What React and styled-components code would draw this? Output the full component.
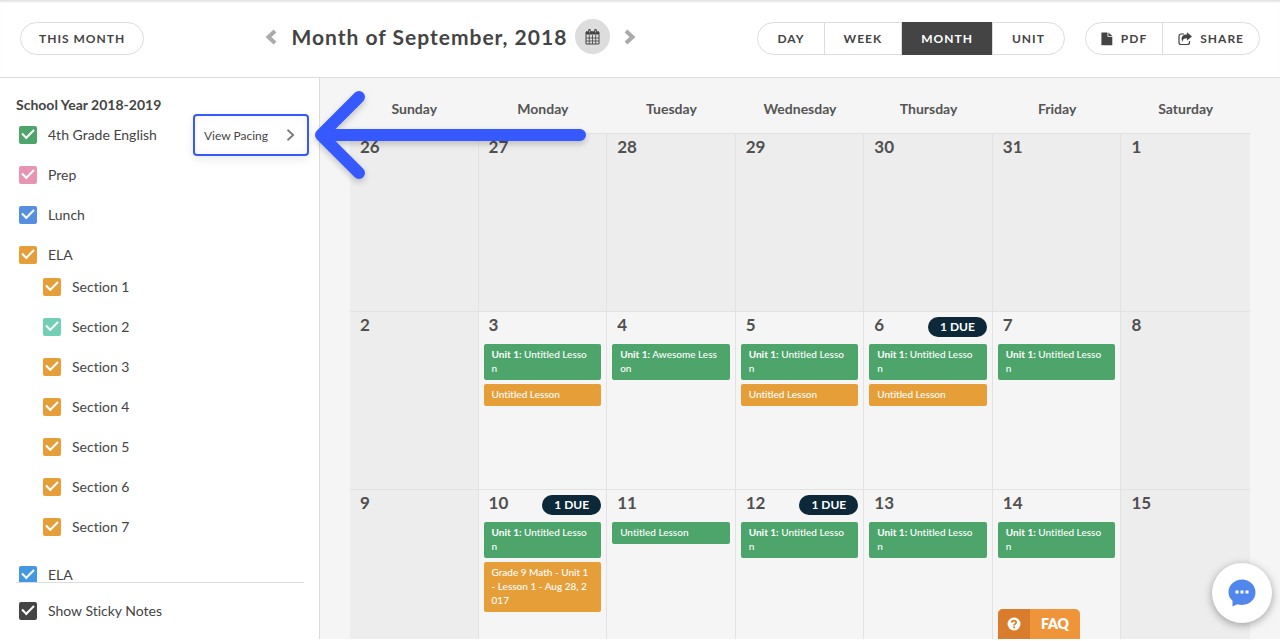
import React from 'react';
import styled, { createGlobalStyle } from 'styled-components';

const GREEN = '#4ea56c';
const ORANGE = '#e69e39';

const classes = [
    { name: '4th Grade English', color: GREEN, pacing: true },
    { name: 'Prep', color: '#e895b2' },
    { name: 'Lunch', color: '#548fe0' },
    {
        name: 'ELA',
        color: ORANGE,
        sections: [
            { name: 'Section 1', color: ORANGE },
            { name: 'Section 2', color: '#70cfb4' },
            { name: 'Section 3', color: ORANGE },
            { name: 'Section 4', color: ORANGE },
            { name: 'Section 5', color: ORANGE },
            { name: 'Section 6', color: ORANGE },
            { name: 'Section 7', color: ORANGE },
        ],
    },
    { name: 'ELA', color: '#4299e1' },
];

const weekdays = ['Sunday', 'Monday', 'Tuesday', 'Wednesday', 'Thursday', 'Friday', 'Saturday'];

const unitLesson = { unit: 'Unit 1:', lines: [' Untitled Lesso', 'n'], color: GREEN };
const looseLesson = { lines: ['Untitled Lesson'], color: ORANGE };

const weeks = [
    [26, 27, 28, 29, 30, 31, 1].map((day) => ({ day, muted: true })),
    [
        { day: 2, muted: true },
        { day: 3, events: [unitLesson, looseLesson] },
        { day: 4, events: [{ unit: 'Unit 1:', lines: [' Awesome Less', 'on'], color: GREEN }] },
        { day: 5, events: [unitLesson, looseLesson] },
        { day: 6, due: 1, events: [unitLesson, looseLesson] },
        { day: 7, events: [unitLesson] },
        { day: 8, muted: true },
    ],
    [
        { day: 9, muted: true },
        {
            day: 10,
            due: 1,
            events: [
                unitLesson,
                { lines: ['Grade 9 Math - Unit 1', '- Lesson 1 - Aug 28, 2', '017'], color: ORANGE },
            ],
        },
        { day: 11, events: [{ lines: ['Untitled Lesson'], color: GREEN }] },
        { day: 12, due: 1, events: [unitLesson] },
        { day: 13, events: [unitLesson] },
        { day: 14, events: [unitLesson] },
        { day: 15, muted: true },
    ],
];

const Chevron = ({ left, size = 16, weight = 4 }) => (
    <svg width={size} height={size} viewBox="0 0 16 16" fill="none" stroke="currentColor" strokeWidth={weight} aria-hidden="true">
        <path d={left ? 'M12 2 L5.5 8 L12 14' : 'M4 2 L10.5 8 L4 14'} />
    </svg>
);

const CalendarIcon = () => (
    <svg width="15" height="16" viewBox="0 0 15 16" fill="none" stroke="currentColor" aria-hidden="true">
        <path d="M1 3h13v12H1z" />
        <path d="M1 4h13" strokeWidth="3" />
        <path d="M4.3 6v9M7.5 6v9M10.7 6v9M1 9h13M1 12h13" strokeWidth="0.8" />
        <path d="M4.5 1v3M10.5 1v3" strokeWidth="2.4" strokeLinecap="round" />
        <path d="M4.5 1.5v2M10.5 1.5v2" stroke="#ddd" strokeWidth="0.7" />
    </svg>
);

const FileIcon = () => (
    <svg width="12" height="14" viewBox="0 0 12 14" fill="currentColor" aria-hidden="true">
        <path d="M1 .5h5.500v4.300h4.800v8.500H1a.6.6 0 0 1-.6-.6V1.100a.6.6 0 0 1 .6-.6z" />
        <path d="M7.400.5l3.900 3.500H7.400z" />
    </svg>
);

const ShareIcon = () => (
    <svg width="14" height="14" viewBox="0 0 14 14" fill="none" stroke="currentColor" strokeWidth="1.2" aria-hidden="true">
        <path d="M6 2H3a2 2 0 0 0-2 2v6.500a2 2 0 0 0 2 2h6.500a2 2 0 0 0 2-2V9" />
        <path d="M9 .3v2.200C5.200 2.500 3.500 4.400 3.600 7c0 1 .4 2.100 1 2.900C4.500 7.200 6 6.300 9 6.300v2.300l5-4.200z" fill="currentColor" stroke="none" />
    </svg>
);

const CheckRow = ({ name, color, pacing }) => (
    <Row>
        <CheckLabel>
            <Checkbox type="checkbox" defaultChecked $color={color} />
            {name}
        </CheckLabel>
        {pacing && (
            <PacingButton type="button">
                View Pacing
                <Chevron size={14} weight={2} />
            </PacingButton>
        )}
    </Row>
);

const Day = ({ day, muted, due, events = [] }) => (
    <Cell $muted={muted}>
        <DayTop>
            {day}
            {due && <Due>{due} DUE</Due>}
        </DayTop>
        {events.map((event, i) => (
            <Event key={i} $color={event.color}>
                {event.lines.map((line, n) => (
                    <div key={line}>
                        {n === 0 && event.unit && <b>{event.unit}</b>}
                        {line}
                    </div>
                ))}
            </Event>
        ))}
    </Cell>
);

const App = () => {
    return (
        <Page>
            <GlobalStyle />
            <Header>
                <Pill type="button">THIS MONTH</Pill>
                <MonthNav>
                    <IconButton type="button" aria-label="Previous month"><Chevron left /></IconButton>
                    <Title>Month of September, 2018</Title>
                    <DateButton type="button" aria-label="Pick a date"><CalendarIcon /></DateButton>
                    <IconButton type="button" aria-label="Next month"><Chevron /></IconButton>
                </MonthNav>
                <Actions>
                    <Group>
                        <GroupButton type="button">DAY</GroupButton>
                        <GroupButton type="button">WEEK</GroupButton>
                        <GroupButton type="button" $active>MONTH</GroupButton>
                        <GroupButton type="button">UNIT</GroupButton>
                    </Group>
                    <Group>
                        <ExportButton type="button"><FileIcon />PDF</ExportButton>
                        <ExportButton type="button"><ShareIcon />SHARE</ExportButton>
                    </Group>
                </Actions>
            </Header>
            <Body>
                <Sidebar>
                    <ClassArea>
                        <SidebarTitle>School Year 2018-2019</SidebarTitle>
                        <List>
                            {classes.map((item, i) => (
                                <li key={i}>
                                    <CheckRow {...item} />
                                    {item.sections && (
                                        <SectionList>
                                            {item.sections.map((section) => (
                                                <li key={section.name}><CheckRow {...section} /></li>
                                            ))}
                                        </SectionList>
                                    )}
                                </li>
                            ))}
                        </List>
                    </ClassArea>
                    <SidebarFooter>
                        <CheckLabel>
                            <Checkbox type="checkbox" defaultChecked $color="#444" />
                            Show Sticky Notes
                        </CheckLabel>
                    </SidebarFooter>
                </Sidebar>
                <Main>
                    <Weekdays>
                        {weekdays.map((name) => <span key={name}>{name}</span>)}
                    </Weekdays>
                    <Grid>
                        {weeks.flat().map((item) => <Day key={`${item.day}-${item.muted}`} {...item} />)}
                    </Grid>
                </Main>
                <Arrow viewBox="0 0 288 104" aria-hidden="true">
                    <path d="M53 14 L15 52 L53 90 M15 52 H274" />
                </Arrow>
                <Faq type="button">
                    <FaqMark>
                        <svg width="14" height="14" viewBox="0 0 14 14" aria-hidden="true">
                            <circle cx="7" cy="7" r="6.5" fill="#fff" />
                            <path d="M4.800 5.600C4.900 2.900 9.300 3 9.200 5.500 9.200 6.900 7.100 6.900 7.100 8.500" fill="none" stroke="#d97c2c" strokeWidth="1.8" />
                            <path d="M6.100 9.400h2v1.800h-2z" fill="#d97c2c" />
                        </svg>
                    </FaqMark>
                    <FaqText>FAQ</FaqText>
                </Faq>
                <Chat type="button" aria-label="Open chat">
                    <svg width="28" height="28" viewBox="0 0 28 28" aria-hidden="true">
                        <path d="M14 .5C6.500.5.5 6 .5 13.300c0 3.600 1.500 6.200 4 8.500V27.500l4.800-2.300c1.500.5 3 .7 4.700.7 7.500 0 13.500-5.300 13.500-12.600S21.500.5 14 .5z" fill="#5186ec" />
                        <path d="M7.500 11.500h3v3h-3zM12.500 11.500h3v3h-3zM17.500 11.500h3v3h-3z" fill="#fff" />
                    </svg>
                </Chat>
            </Body>
        </Page>
    )
}

export default App;

const GlobalStyle = createGlobalStyle`
    *, *::after {
        box-sizing: border-box;
    }

    body {
        margin: 0;
        background: #fff;
        color: #444;
        font-family: Lato, 'Liberation Sans', sans-serif;
        font-variant-ligatures: none;
    }

    button {
        font-family: inherit;
        color: inherit;
        padding: 0;
        border: 0;
        background: none;
        cursor: pointer;
    }
`;

const Page = styled.div`
    height: 100vh;
    padding: 0 2px 2px 0;
    display: flex;
    flex-direction: column;
    overflow: hidden;
`;

const Header = styled.header`
    flex: none;
    display: flex;
    justify-content: space-between;
    align-items: center;
    padding: 19px 20px;
    border-bottom: 1px solid #dcdcdc;
    box-shadow: inset 0 3px 2px -1px #e4e4e4;
`;

const Pill = styled.button`
    height: 33px;
    padding: 0 18px;
    border: 1px solid #dcdcdc;
    border-radius: 17px;
    font-size: 12px;
    font-weight: 700;
    letter-spacing: 1px;
`;

const MonthNav = styled.div`
    display: flex;
    align-items: center;
    padding-bottom: 4px;
`;

const Title = styled.h1`
    margin: 0 8px 0 12px;
    font-size: 21px;
    line-height: 35px;
    font-weight: 700;
    letter-spacing: 1px;
`;

const IconButton = styled.button`
    display: flex;
    color: #aaa;
`;

const DateButton = styled.button`
    width: 35px;
    height: 35px;
    margin-right: 12px;
    display: flex;
    align-items: center;
    justify-content: center;
    border-radius: 50%;
    background: #ddd;
`;

const Actions = styled.div`
    display: flex;
    gap: 20px;
`;

const Group = styled.div`
    display: flex;
    height: 33px;
    border: 1px solid #dcdcdc;
    border-radius: 17px;
`;

const GroupButton = styled.button`
    margin: -1px 0;
    padding: 0 19px;
    font-size: 12px;
    font-weight: 700;
    letter-spacing: 1px;
    background: ${(props) => (props.$active ? '#444' : 'none')};
    color: ${(props) => (props.$active ? '#fff' : '#444')};

    & + & {
        border-left: 1px solid #dcdcdc;
    }
`;

const ExportButton = styled(GroupButton)`
    display: flex;
    align-items: center;
    gap: 8px;
    padding: 0 15px;
`;

const Body = styled.div`
    position: relative;
    flex: 1;
    min-height: 0;
    display: flex;
    overflow: hidden;
`;

const Sidebar = styled.aside`
    flex: none;
    width: 320px;
    display: flex;
    flex-direction: column;
    border-right: 1px solid #dcdcdc;
`;

const ClassArea = styled.div`
    flex: 1;
    min-height: 0;
    padding: 16px 10px 0 16px;
    overflow: hidden;
`;

const SidebarTitle = styled.h2`
    margin: 0;
    font-size: 14px;
    line-height: 21px;
    font-weight: 700;
`;

const List = styled.ul`
    margin: 0;
    padding: 0 0 0 3px;
    list-style: none;
`;

const SectionList = styled(List)`
    margin: -8px 0 8px;
    padding-left: 24px;
`;

const Row = styled.div`
    height: 40px;
    display: flex;
    align-items: center;
    justify-content: space-between;
`;

const CheckLabel = styled.label`
    display: flex;
    align-items: center;
    gap: 11px;
    font-size: 14px;
    line-height: 20px;
`;

const Checkbox = styled.input`
    appearance: none;
    position: relative;
    width: 18px;
    height: 18px;
    margin: 0;
    border-radius: 2px;
    background: ${(props) => props.$color};

    &:checked::after {
        content: '';
        position: absolute;
        left: 3px;
        top: 3px;
        width: 12px;
        height: 7px;
        border: solid #fff;
        border-width: 0 0 2px 2px;
        transform: rotate(-45deg);
    }
`;

const PacingButton = styled.button`
    height: 42px;
    width: 116px;
    flex: none;
    display: flex;
    align-items: center;
    justify-content: space-between;
    padding: 0 9px;
    border: 2px solid #3558ff;
    border-radius: 4px;
    box-shadow: 0 4px 10px rgba(0, 0, 0, 0.08), inset 0 0 10px rgba(0, 0, 0, 0.05);
    font-size: 12px;

    svg {
        color: #777;
    }
`;

const SidebarFooter = styled.div`
    flex: none;
    margin: 0 15px 0 16px;
    padding: 18px 3px;
    border-top: 1px solid #dcdcdc;
`;

const Main = styled.main`
    flex: 1;
    min-width: 0;
    padding: 0 30px;
    background: #f5f5f5;
    overflow: hidden;
`;

const Weekdays = styled.div`
    display: grid;
    grid-template-columns: repeat(7, 1fr);
    padding: 20px 0 13px;
    font-size: 14px;
    line-height: 22px;
    font-weight: 700;
    text-align: center;
    color: #555;
`;

const Grid = styled.div`
    display: grid;
    grid-template-columns: repeat(7, 1fr);
    grid-auto-rows: 178px;
`;

const Cell = styled.section`
    min-width: 0;
    display: flex;
    flex-direction: column;
    gap: 4px;
    padding: 5px;
    border-top: 1px solid #e2e2e2;
    border-right: 1px solid #e2e2e2;
    background: ${(props) => (props.$muted ? '#ededed' : '#f5f5f5')};

    &:nth-child(7n) {
        border-right: 0;
    }
`;

const DayTop = styled.div`
    display: flex;
    justify-content: space-between;
    align-items: flex-start;
    height: 23px;
    padding-left: 5px;
    font-size: 17px;
    line-height: 16px;
    font-weight: 700;
    color: #505050;
`;

const Due = styled.span`
    padding: 0 12px;
    border-radius: 10px;
    background: #0d2838;
    color: #fff;
    font-size: 12px;
    line-height: 20px;
`;

const Event = styled.div`
    padding: 3px 8px 5px;
    border-radius: 2px;
    background: ${(props) => props.$color};
    color: #fff;
    font-size: 10px;
    line-height: 14px;
    font-weight: 500;
    white-space: pre;
`;

const Arrow = styled.svg`
    position: absolute;
    left: 306px;
    top: 5px;
    width: 288px;
    fill: none;
    stroke: #3558ff;
    stroke-width: 12px;
    stroke-linecap: round;
    stroke-linejoin: round;
    filter: drop-shadow(0 3px 3px rgba(0, 0, 0, 0.2));
    pointer-events: none;
`;

const Faq = styled.button`
    position: absolute;
    right: 200px;
    bottom: 0;
    display: flex;
    height: 30px;
    border-radius: 5px 5px 0 0;
    overflow: hidden;
    background: #f0943a;
    color: #fff;
    font-size: 14px;
    font-weight: 800;
`;

const FaqMark = styled.span`
    width: 32px;
    height: 30px;
    display: flex;
    align-items: center;
    justify-content: center;
    background: #d97c2c;
`;

const FaqText = styled.span`
    padding: 0 11px;
    line-height: 30px;
`;

const Chat = styled.button`
    position: absolute;
    right: 8px;
    bottom: 16px;
    width: 60px;
    height: 60px;
    display: flex;
    align-items: center;
    justify-content: center;
    border-radius: 50%;
    background: #fff;
    box-shadow: 0 2px 8px rgba(0, 0, 0, 0.35);
`;
